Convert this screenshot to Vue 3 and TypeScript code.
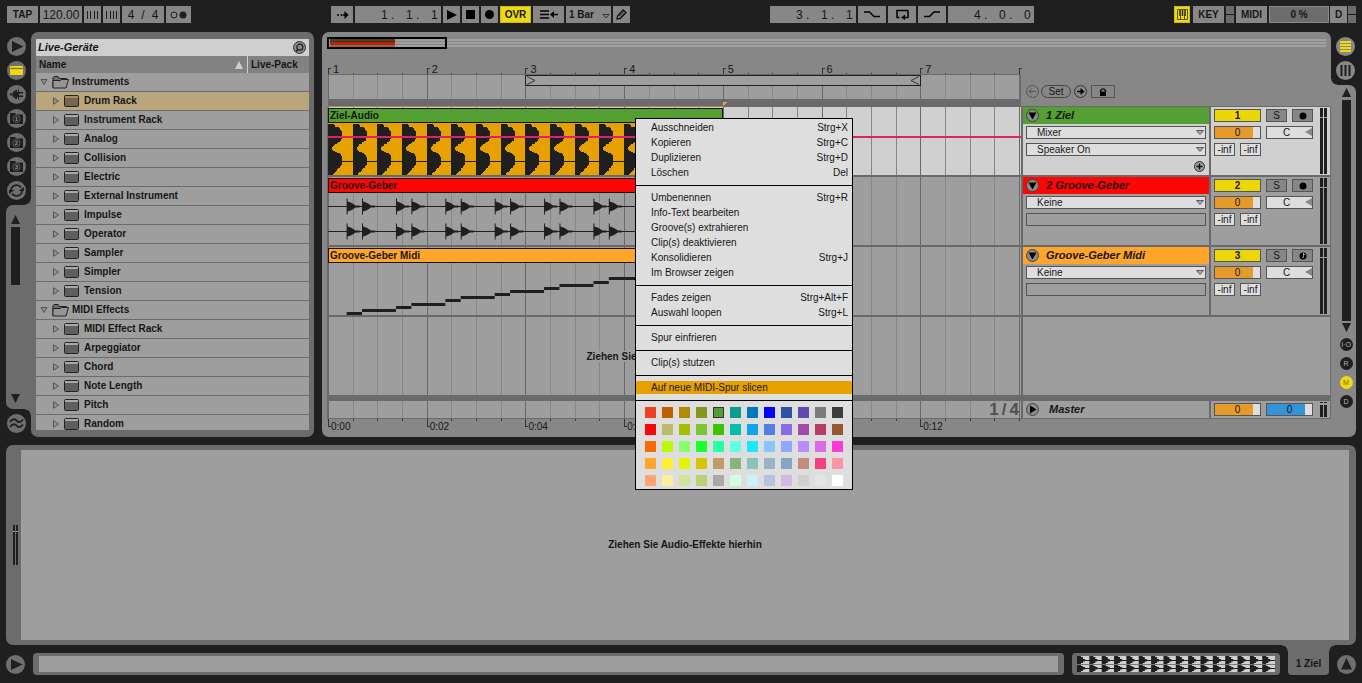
<script setup lang="ts">
import { ref } from 'vue'

interface Device { name: string; folder?: boolean }
interface Track {
  name: string
  clip: string
  color: string
  kind: 'beat' | 'hits' | 'midi'
  inputs: string[]
  number: number
}
interface MenuItem { label: string; keys?: string; current?: boolean }

const devices: Device[] = [
  { name: 'Instruments', folder: true },
  ...['Drum Rack', 'Instrument Rack', 'Analog', 'Collision', 'Electric', 'External Instrument', 'Impulse',
    'Operator', 'Sampler', 'Simpler', 'Tension'].map((name) => ({ name })),
  { name: 'MIDI Effects', folder: true },
  ...['MIDI Effect Rack', 'Arpeggiator', 'Chord', 'Note Length', 'Pitch', 'Random'].map((name) => ({ name })),
]
const selectedDevice = ref('Drum Rack')

const tracks: Track[] = [
  { name: '1 Ziel', clip: 'Ziel-Audio', color: '#539f31', kind: 'beat', inputs: ['Mixer', 'Speaker On'], number: 1 },
  { name: '2 Groove-Geber', clip: 'Groove-Geber', color: '#ff0505', kind: 'hits', inputs: ['Keine'], number: 2 },
  { name: 'Groove-Geber Midi', clip: 'Groove-Geber Midi', color: '#ffa529', kind: 'midi', inputs: ['Keine'], number: 3 },
]

const menu: MenuItem[][] = [
  [
    { label: 'Ausschneiden', keys: 'Strg+X' },
    { label: 'Kopieren', keys: 'Strg+C' },
    { label: 'Duplizieren', keys: 'Strg+D' },
    { label: 'Löschen', keys: 'Del' },
  ],
  [
    { label: 'Umbenennen', keys: 'Strg+R' },
    { label: 'Info-Text bearbeiten' },
    { label: 'Groove(s) extrahieren' },
    { label: 'Clip(s) deaktivieren' },
    { label: 'Konsolidieren', keys: 'Strg+J' },
    { label: 'Im Browser zeigen' },
  ],
  [
    { label: 'Fades zeigen', keys: 'Strg+Alt+F' },
    { label: 'Auswahl loopen', keys: 'Strg+L' },
  ],
  [{ label: 'Spur einfrieren' }],
  [{ label: 'Clip(s) stutzen' }],
  [{ label: 'Auf neue MIDI-Spur slicen', current: true }],
]

const swatches: string[] = (
  'ee4023 c06000 b08b00 85961f 539f31 0a9c8e 007abd 0303ff 2f52a2 624bad 7b7b7b 3c3c3c ' +
  'ff0505 bfba69 a6be00 7ac634 3dc300 00bfaf 10a4ee 5480e4 886ce4 a34bad b73d69 965735 ' +
  'f66c03 bffb00 87ff67 1aff2f 25ffa8 5cffe8 19e9ff 8bc5ff 92a7ff b88dff d86ce4 ff39d4 ' +
  'ffa529 fff034 e3f403 dac301 bd9d63 89b47d 88c4ba 9bb3c4 85a5c2 c68b7c f14180 ff94a6 ' +
  'ffa374 ffee9f d2e498 bad074 a9a9a9 d4fde1 cdf1f8 b9c1e3 cdbbe4 d0d0d0 dfe6e5 ffffff'
).split(' ').map((c) => '#' + c)
const clipColor = ref('#539f31')

const beats = Array.from({ length: 29 }, (_, i) => i)
const bars = [1, 2, 3, 4, 5, 6, 7]
const beatLeft = (i: number): string => `${(i / 28) * 100}%`
const clock = (bar: number): string => `0:${String((bar - 1) * 2).padStart(2, '0')}`

const BEAT = 24.68
const beatStarts = Array.from({ length: 16 }, (_, i) => i * BEAT)
const hitStarts = Array.from({ length: 16 }, (_, i) => Math.floor(i / 2) * BEAT * 2 + (i % 2 ? 34 : 18.6))
const notes = hitStarts.map((x, i) => ({ x, w: (hitStarts[i + 1] ?? 395) - x, y: Math.round(49 - i * 3.15) }))
const lobe = 'M0 0H5L7 1V3H10L12 4V6L14 7V14L13 15V17L10 18L9 20H7L6 22L4 23V26L6 27L7 28L11 29L13 31L14 33V41L12 42V44H10L9 47L7 48L5 50V51H0Z'
const hit = 'M0 -8H1V-5L4 -4L6 -3L9 -1H13V1H9L6 3L4 4L1 5V8H0Z'
</script>

<template>
  <div class="app">
    <header class="transport">
      <div class="group">
        <button class="box w31">TAP</button>
        <input class="box tempo" type="text" value="120.00" aria-label="Tempo" />
        <button class="box w17" aria-label="Nudge down">
          <svg width="13" height="8" viewBox="0 0 13 8"><path d="M1.5 0V8M4.5 0V8M8.5 0V8M11.5 0V8" stroke="#1f1f1f" /></svg>
        </button>
        <button class="box w17" aria-label="Nudge up">
          <svg width="13" height="8" viewBox="0 0 13 8"><path d="M1.5 0V8M5.5 0V8M8.5 0V8M11.5 0V8" stroke="#1f1f1f" /></svg>
        </button>
        <div class="box signature"><span>4</span><span>/</span><span>4</span></div>
        <button class="box w25" aria-label="Metronome">
          <svg width="17" height="8" viewBox="0 0 17 8"><circle cx="4" cy="4" r="3" fill="none" stroke="#1f1f1f" /><circle cx="13" cy="4" r="3.5" fill="#1f1f1f" /></svg>
        </button>
      </div>

      <div class="group">
        <button class="box w22" aria-label="Follow">
          <svg width="13" height="8" viewBox="0 0 13 8"><circle cx="2" cy="4" r="1" /><circle cx="5.5" cy="4" r="1" /><path d="M7 3.2H8.500V0L12.500 4L8.500 8V4.800H7Z" /></svg>
        </button>
        <div class="box position">
          <input value="1 ." aria-label="Bar" /><input value="1 ." aria-label="Beat" /><input value="1" aria-label="Sixteenth" />
        </div>
        <button class="box w17" aria-label="Play"><svg width="10" height="10" viewBox="0 0 10 10"><path d="M0 0L10 5L0 10Z" /></svg></button>
        <button class="box w17" aria-label="Stop"><svg width="9" height="9" viewBox="0 0 9 9"><path d="M0 0H9V9H0Z" /></svg></button>
        <button class="box w17" aria-label="Record"><svg width="9" height="9" viewBox="0 0 9 9"><circle cx="4.5" cy="4.5" r="4.5" /></svg></button>
        <button class="box w31 lit">OVR</button>
        <button class="box w31" aria-label="Back to arrangement">
          <svg width="18" height="9" viewBox="0 0 18 9"><path d="M0 1H9M0 4.5H9M0 8H9" stroke="#000" stroke-width="1.5" /><path d="M10 4.5L14 1V3.700H18V5.300H14V8Z" /></svg>
        </button>
        <label class="box quant">
          <select aria-label="Quantization"><option>1 Bar</option></select>
          <svg width="8" height="5" viewBox="0 0 8 5"><path d="M1 .5H7L4 4Z" fill="none" stroke="#1f1f1f" stroke-width=".8" /></svg>
        </label>
        <button class="box w17" aria-label="Draw mode">
          <svg width="11" height="11" viewBox="0 0 11 11"><path d="M1 10L1.500 7L7 1L10 3.500L4.500 9.500Z" fill="none" stroke="#111" stroke-width="1.3" /><path d="M3 7.500L8 2.500M4.500 8.500L9 3.800" stroke="#111" /></svg>
        </button>
      </div>

      <div class="group">
        <div class="box position">
          <input value="3 ." aria-label="Loop start bar" /><input value="1 ." aria-label="Loop start beat" /><input value="1" aria-label="Loop start sixteenth" />
        </div>
        <button class="box w28" aria-label="Punch in"><svg width="16" height="7" viewBox="0 0 16 7"><path d="M0 1H5.500L10 5.500H16" fill="none" stroke="#000" stroke-width="1.5" /></svg></button>
        <button class="box w28" aria-label="Loop"><svg width="13" height="11" viewBox="0 0 13 11"><path d="M3.500 8.500H1V1.500H12V8.500H8" fill="none" stroke="#000" stroke-width="1.5" /><path d="M5 8.500L9 5.500V11Z" /></svg></button>
        <button class="box w28" aria-label="Punch out"><svg width="16" height="7" viewBox="0 0 16 7"><path d="M0 5.500H5.500L10 1H16" fill="none" stroke="#000" stroke-width="1.5" /></svg></button>
        <div class="box position">
          <input value="4 ." aria-label="Loop length bars" /><input value="0 ." aria-label="Loop length beats" /><input value="0" aria-label="Loop length sixteenths" />
        </div>
      </div>

      <div class="group">
        <button class="box w16 lit" aria-label="Computer MIDI keyboard">
          <svg width="11" height="11" viewBox="0 0 11 11"><path d="M.5 .5H10.500V10.500H.5ZM3.500 6V10M7.500 6V10" fill="none" stroke="#5a5000" /><path d="M3 1V7M5.500 1V7M8 1V7" stroke="#1f1f1f" stroke-width="1.4" /></svg>
        </button>
        <span class="spacer"></span>
        <button class="box w31">KEY</button>
        <span class="leds"><i></i><i></i></span>
        <button class="box w31">MIDI</button>
        <div class="box cpu">0 %</div>
        <button class="box w17 tight">D</button>
        <span class="leds tight"><i></i><i></i></span>
      </div>
    </header>

    <main class="workspace">
      <nav class="rail left" aria-label="Browser">
        <button class="round" aria-label="Hide browser"><svg viewBox="0 0 19 19"><path d="M5 4L16.500 9.500L5 15Z" /></svg></button>
        <button class="round" aria-label="Live devices"><svg viewBox="0 0 19 19"><rect x="3" y="5" width="13" height="9" rx="1" fill="#efda10" /><path d="M3.500 7.500H15.500" stroke="#7a6a00" stroke-width="1.2" /></svg></button>
        <button class="round" aria-label="Plug-ins"><svg viewBox="0 0 19 19"><path d="M3 8.500H6V6.500H8V5H10V7H11V4.500H12V7H16V8.500H12V10.500H16V12H12V14.500H11V12H10V14H8V12.500H6V10.500H3Z" /></svg></button>
        <button v-for="n in 3" :key="n" class="round" :aria-label="'File browser ' + n">
          <svg viewBox="0 0 19 19"><path d="M3 4H8L9 5.500H16V15H3Z" /><circle cx="9.5" cy="10" r="3.6" fill="none" stroke="#858585" stroke-width=".6" /><text x="9.5" y="12.3" text-anchor="middle">{{ n }}</text></svg>
        </button>
        <button class="round" aria-label="Hot-swap"><svg viewBox="0 0 19 19"><path d="M4 9A5.500 5.500 0 0 1 14 6.500M15 10A5.500 5.500 0 0 1 5 12.500" fill="none" stroke="#1f1f1f" stroke-width="1.8" /><path d="M17 6V10H11.500ZM2 13V9H7.500Z" /></svg></button>
        <div class="scroller">
          <svg width="9" height="9" viewBox="0 0 9 9"><path d="M0 9L4.500 0L9 9Z" /></svg>
          <i class="thumb"></i>
          <svg class="down" width="9" height="9" viewBox="0 0 9 9"><path d="M0 0L4.500 9L9 0Z" /></svg>
        </div>
        <button class="round" aria-label="Grooves"><svg viewBox="0 0 19 19"><path d="M3 8C6 4 8 5 10 7S14 8 16 5.500M3 13C6 9 8 10 10 12S14 13 16 10.500" fill="none" stroke="#1f1f1f" stroke-width="1.8" /></svg></button>
      </nav>

      <aside class="browser">
        <h1 class="browser-title">Live-Geräte
          <button class="search" aria-label="Search"><svg width="13" height="13" viewBox="0 0 13 13"><circle cx="6.5" cy="6.5" r="6" fill="#8b8b8b" stroke="#333" /><circle cx="6.8" cy="6.2" r="3" fill="none" stroke="#1f1f1f" stroke-width="1.2" /><path d="M4.800 8.500L3 10.500" stroke="#1f1f1f" stroke-width="1.4" /></svg></button>
        </h1>
        <div class="browser-head">
          <button class="col-name">Name<svg width="8" height="8" viewBox="0 0 8 8"><path d="M0 8L4 0L8 8Z" fill="#cfcfcf" /></svg></button>
          <button class="col-pack">Live-Pack</button>
        </div>
        <ul class="devices">
          <li v-for="d in devices" :key="d.name">
            <button :class="['device', { folder: d.folder, selected: d.name === selectedDevice }]" @click="selectedDevice = d.name">
              <svg v-if="d.folder" class="twist" width="8" height="8" viewBox="0 0 8 8"><path d="M1 1.500H7L4 6.500Z" fill="#8b8b8b" stroke="#444" stroke-width=".8" /></svg>
              <svg v-else class="twist" width="8" height="8" viewBox="0 0 8 8"><path d="M1.500 .8V7.200L6.500 4Z" fill="#959595" stroke="#444" stroke-width=".8" /></svg>
              <svg v-if="d.folder" class="icon" width="17" height="13" viewBox="0 0 17 13"><path d="M1 12V1.500L2 .5H6L7 2.500H14.500V4.500" fill="#6f6f6f" stroke="#222" /><path d="M1 12V4.500H8.500L9.500 3.500H16.500L14 12Z" fill="#959595" stroke="#222" /></svg>
              <svg v-else class="icon" width="15" height="12" viewBox="0 0 15 12"><rect x=".5" y=".5" width="14" height="11" rx="1" :fill="d.name === selectedDevice ? '#a08f6a' : '#a9a9a9'" stroke="#222" /><rect x="1" y="3" width="13" height="8" :fill="d.name === selectedDevice ? '#75674c' : '#5f5f62'" /></svg>
              {{ d.name }}
            </button>
          </li>
        </ul>
      </aside>

      <section class="arrangement">
        <div class="overview">
          <div class="window"><i class="mini"></i></div>
        </div>
        <div class="board">
          <div class="row head">
            <div class="ruler">
              <div class="numbers">
                <div class="grid">
                  <i v-for="b in beats" :key="b" :class="{ bar: b % 4 === 0 }" :style="{ left: beatLeft(b) }"></i>
                  <span v-for="n in bars" :key="'n' + n" :style="{ left: beatLeft((n - 1) * 4) }">{{ n }}</span>
                </div>
              </div>
              <div class="strip">
                <div class="grid">
                  <i v-for="b in beats" :key="b" :class="{ bar: b % 4 === 0 }" :style="{ left: beatLeft(b) }"></i>
                  <div class="loop">
                    <svg width="10" height="9" viewBox="0 0 10 9"><path d="M1 .5L9 4.500L1 8.500" fill="none" stroke="#333" /></svg>
                    <svg width="10" height="9" viewBox="0 0 10 9"><path d="M9 .5L1 4.500L9 8.500" fill="none" stroke="#333" /></svg>
                  </div>
                </div>
              </div>
              <div class="scrub"><div class="selection"></div></div>
            </div>
            <div class="locators">
              <button class="tiny" aria-label="Previous locator"><svg width="13" height="13" viewBox="0 0 13 13"><circle cx="6.5" cy="6.5" r="6" fill="none" stroke="#555" /><path d="M3 6.500H10M6 3.500L3 6.500L6 9.500" fill="none" stroke="#555" /></svg></button>
              <button class="set">Set</button>
              <button class="tiny" aria-label="Next locator"><svg width="13" height="13" viewBox="0 0 13 13"><circle cx="6.5" cy="6.5" r="6" fill="none" stroke="#333" /><path d="M3 6.500H8" stroke="#000" stroke-width="1.5" /><path d="M6.500 3L10.500 6.500L6.500 10Z" /></svg></button>
              <button class="lock" aria-label="Lock envelopes"><svg width="8" height="8" viewBox="0 0 8 8"><path d="M1.500 4V2.500L3 1H5L6.500 2.500V4" fill="none" stroke="#000" stroke-width="1.2" /><path d="M1 3.500H7V8H1Z" /></svg></button>
            </div>
          </div>

          <div v-for="t in tracks" :key="t.name" :class="['row', 'track', { chosen: t.number === 1 }]">
            <div class="lane">
              <div class="grid">
                <i v-for="b in beats" :key="b" :class="{ bar: b % 4 === 0 }" :style="{ left: beatLeft(b) }"></i>
              </div>
              <div :class="['clip', t.kind]">
                <div class="clip-title" :style="{ background: t.color }">{{ t.clip }}</div>
                <svg class="wave" viewBox="0 0 395 52" preserveAspectRatio="none">
                  <template v-if="t.kind === 'beat'">
                    <path v-for="x in beatStarts" :key="x" :d="lobe" :transform="`translate(${x} 1)`" />
                    <path d="M0 38.500H395" stroke="#1f1f1f" />
                  </template>
                  <template v-else-if="t.kind === 'hits'">
                    <path d="M0 13.500H395M0 38.500H395" stroke="#1f1f1f" />
                    <template v-for="x in hitStarts" :key="x">
                      <path :d="hit" :transform="`translate(${x} 13.5)`" />
                      <path :d="hit" :transform="`translate(${x} 38.5)`" />
                    </template>
                  </template>
                  <template v-else>
                    <rect v-for="n in notes" :key="n.x" :x="n.x" :y="n.y" :width="n.w" height="3" />
                  </template>
                </svg>
              </div>
              <i v-if="t.number === 1" class="envelope"></i>
            </div>
            <div class="names">
              <div class="track-title" :style="{ background: t.color }">
                <button class="tiny" :aria-label="'Fold ' + t.name"><svg width="13" height="13" viewBox="0 0 13 13"><circle cx="6.5" cy="6.5" r="6" fill="#8b8b8b" stroke="#444" /><path d="M2.500 3.500H10.500L6.500 10.500Z" /></svg></button>
                {{ t.name }}
              </div>
              <label v-for="o in t.inputs" :key="o" class="chooser">
                <select :aria-label="t.name + ': ' + o"><option>{{ o }}</option></select>
                <svg width="8" height="5" viewBox="0 0 8 5"><path d="M.5 .5H7.500L4 4.500Z" fill="#aaa" stroke="#444" stroke-width=".8" /></svg>
              </label>
              <div v-if="t.inputs.length < 2" class="chooser blank"></div>
              <button v-else class="add" aria-label="Add lane"><svg width="11" height="11" viewBox="0 0 11 11"><circle cx="5.5" cy="5.5" r="5" fill="#9a9a9a" stroke="#333" /><path d="M2.500 5.500H8.500M5.500 2.500V8.500" stroke="#111" stroke-width="1.4" /></svg></button>
            </div>
            <div class="mixer">
              <div class="controls">
                <button class="cell wide activator">{{ t.number }}</button>
                <button class="cell dim">S</button>
                <button class="cell dim" :aria-label="'Arm ' + t.name"><svg width="8" height="8" viewBox="0 0 8 8"><circle cx="4" cy="4" r="3.5" fill="#000" /><path v-if="t.kind === 'midi'" d="M4.500 1V5.500H3M4.500 1.500L6 3" stroke="#aaa" stroke-width=".9" fill="none" /></svg></button>
                <input class="cell wide volume" value="0" :aria-label="'Volume ' + t.name" />
                <label class="wide pan"><input class="cell" value="C" :aria-label="'Pan ' + t.name" /></label>
                <input class="cell" value="-inf" :aria-label="'Send A ' + t.name" />
                <input class="cell" value="-inf" :aria-label="'Send B ' + t.name" />
              </div>
              <div class="meter"><i></i><i></i></div>
            </div>
          </div>

          <div class="row empty">
            <div class="lane">
              <div class="grid">
                <i v-for="b in beats" :key="b" :class="{ bar: b % 4 === 0 }" :style="{ left: beatLeft(b) }"></i>
              </div>
              <p class="hint"><span>Ziehen Sie</span></p>
            </div>
            <div class="void"></div>
          </div>

          <div class="row master">
            <div class="lane">
              <div class="grid">
                <i v-for="b in beats" :key="b" :class="{ bar: b % 4 === 0 }" :style="{ left: beatLeft(b) }"></i>
              </div>
              <div class="fraction"><span>1</span><span>/</span><span>4</span></div>
            </div>
            <div class="names">
              <div class="track-title">
                <button class="tiny" aria-label="Unfold Master"><svg width="13" height="13" viewBox="0 0 13 13"><circle cx="6.5" cy="6.5" r="6" fill="#8b8b8b" stroke="#444" /><path d="M4 2.500V10.500L10.500 6.500Z" /></svg></button>
                Master
              </div>
            </div>
            <div class="mixer">
              <div class="controls">
                <input class="cell wide volume" value="0" aria-label="Master volume" />
                <input class="cell wide cue" value="0" aria-label="Cue volume" />
              </div>
              <div class="meter"><i></i><i></i></div>
            </div>
          </div>
        </div>
        <div class="times">
          <div class="grid">
            <i v-for="b in beats" :key="b" :class="{ bar: b % 4 === 0 && b < 28 }" :style="{ left: beatLeft(b) }"></i>
            <span v-for="n in bars" :key="'t' + n" :style="{ left: beatLeft((n - 1) * 4) }">{{ clock(n) }}</span>
          </div>
        </div>
      </section>

      <nav class="rail right" aria-label="Views">
        <button class="round" aria-label="Arrangement view"><svg viewBox="0 0 19 19"><path d="M4 5H15M4 8H15M4 11H15M4 14H15" stroke="#efda10" stroke-width="2" /></svg></button>
        <button class="round" aria-label="Session view"><svg viewBox="0 0 19 19"><path d="M5.500 4V15M9.500 4V15M13.500 4V15" stroke="#1f1f1f" stroke-width="2" /></svg></button>
        <div class="scroller">
          <svg width="9" height="9" viewBox="0 0 9 9"><path d="M0 9L4.500 0L9 9Z" /></svg>
          <i class="thumb"></i>
          <svg class="down" width="9" height="9" viewBox="0 0 9 9"><path d="M0 0L4.500 9L9 0Z" /></svg>
          <button class="dot">I·O</button>
          <button class="dot">R</button>
          <button class="dot on">M</button>
          <button class="dot">D</button>
        </div>
      </nav>
    </main>

    <section class="detail">
      <div class="meter"><i></i><i></i></div>
      <div class="drop">Ziehen Sie Audio-Effekte hierhin</div>
    </section>

    <footer class="status">
      <button class="round" aria-label="Info view"><svg viewBox="0 0 19 19"><path d="M5 4L16.500 9.500L5 15Z" /></svg></button>
      <div class="message"></div>
      <div class="clip-overview">
        <svg viewBox="0 0 198 16" preserveAspectRatio="none">
          <path d="M0 4.500H198M0 12.500H198" stroke="#1f1f1f" />
          <path d="M0 8.500H198" stroke="#777" />
          <template v-for="n in 16" :key="n">
            <path d="M0 0H4V1H6V3H8V5.500H6V7H4V8H0Z" :transform="`translate(${(n - 1) * 12.35} 0)`" />
            <path d="M0 9H4V10H6V11H8V13.500H6V15H4V16H0Z" :transform="`translate(${(n - 1) * 12.35} 0)`" />
          </template>
        </svg>
      </div>
      <button class="tab">1 Ziel</button>
      <button class="round" aria-label="Detail view"><svg viewBox="0 0 19 19"><path d="M4 14.500L9.500 3L15 14.500Z" /></svg></button>
    </footer>

    <div class="menu" role="menu">
      <div v-for="(group, g) in menu" :key="g" class="menu-group">
        <button v-for="m in group" :key="m.label" role="menuitem" :class="['menu-item', { current: m.current }]">
          <span>{{ m.label }}</span><span>{{ m.keys }}</span>
        </button>
      </div>
      <div class="palette">
        <button v-for="c in swatches" :key="c" :class="{ picked: c === clipColor }" :style="{ background: c }" :aria-label="c" @click="clipColor = c"></button>
      </div>
    </div>
  </div>
</template>

<style>
body { margin: 0; background: #1f1f1f; }
</style>

<style scoped>
.app, .app * { box-sizing: border-box; }
.app {
  position: relative;
  display: flex;
  flex-direction: column;
  min-width: 1200px;
  min-height: 100vh;
  background: #1f1f1f;
  color: #161616;
  font: 10px/12px "Liberation Sans", Arial, sans-serif;
}
button, input, select {
  margin: 0;
  padding: 0;
  border: 0;
  border-radius: 0;
  background: none;
  color: inherit;
  font: inherit;
  appearance: none;
  min-width: 0;
}
svg { display: block; flex: none; }

.transport { display: flex; justify-content: space-between; padding: 6px 6px 9px 7px; }
.group { display: flex; gap: 2px; }
.box {
  display: flex;
  align-items: center;
  justify-content: center;
  height: 17px;
  background: #878787;
  font-weight: bold;
}
.w16 { width: 16px; }
.w17 { width: 17px; }
.w22 { width: 22px; }
.w25 { width: 25px; }
.w28 { width: 28px; }
.w31 { width: 31px; }
.lit { background: #efda10; border: 1px solid #cdbb15; }
.tempo { width: 42px; font-size: 12px; font-weight: normal; text-align: center; }
.signature { width: 42px; gap: 7px; font-size: 12px; font-weight: normal; }
.position { width: 86px; padding-left: 26px; font-size: 12px; font-weight: normal; }
.position input { width: 25px; }
.position input:last-child { width: 10px; }
.quant { width: 45px; gap: 6px; padding-left: 2px; }
.quant select { width: 27px; font-weight: bold; }
.quant svg { margin-top: 3px; }
.spacer { width: 0; margin-right: -1px; }
.leds { display: flex; flex-direction: column; gap: 1px; width: 8px; }
.leds i { flex: 1; background: #6c6c6c; }
.cpu { width: 60px; background: #6c6c6c; border: 1px solid #8b8b8b; }
.tight { margin-left: -1px; }

.workspace { display: flex; }
.rail { display: flex; flex-direction: column; gap: 5px; padding-top: 5px; }
.rail.left { width: 31px; padding-bottom: 4px; padding-left: 7px; }
.rail.right { width: 31px; padding-left: 5px; --tone: #878787; }
.rail.left, .status { --tone: #6f6f6f; }
.round { flex: none; width: 19px; height: 19px; border-radius: 50%; background: var(--tone); }
.round svg { width: 19px; height: 19px; fill: #1f1f1f; }
.round text { fill: #9a9a9a; font: bold 6px "Liberation Sans", Arial, sans-serif; }
.scroller { position: relative; flex: 1; display: flex; flex-direction: column; align-items: center; }
.scroller svg { fill: #1f1f1f; }
.rail.left .scroller {
  margin-left: -1px;
  padding: 10px 6px 6px 0;
  border-radius: 7px 0 0 7px;
  background: #6c6c6c;
}
.scroller::before {
  content: "";
  position: absolute;
  top: -6px;
  width: 6px;
  height: 6px;
}
.rail.left .scroller::before { right: 0; background: radial-gradient(circle at 0 0, transparent 5px, #6c6c6c 6px); }
.rail.left .scroller::after {
  content: "";
  position: absolute;
  right: 0;
  bottom: -6px;
  width: 6px;
  height: 6px;
  background: radial-gradient(circle at 0 100%, transparent 5px, #6c6c6c 6px);
}
.thumb { width: 9px; background: #1f1f1f; }
.rail.left .thumb { height: 58px; margin-top: 3px; }
.rail.left .down { margin-top: auto; }
.rail.right .scroller {
  margin-left: -5px;
  margin-right: 6px;
  padding: 3px 0 29px 5px;
  border-radius: 0 7px 7px 0;
  background: #878787;
}
.rail.right .scroller::before { left: 0; background: radial-gradient(circle at 100% 0, transparent 5px, #878787 6px); }
.rail.right .thumb { flex: 1; margin: 3px 0 2px; }
.dot {
  flex: none;
  width: 13px;
  height: 13px;
  margin-top: 6px;
  border-radius: 50%;
  background: #1f1f1f;
  color: #b0b0b0;
  font-size: 7px;
  line-height: 13px;
  text-align: center;
}
.dot.on { background: #efda10; color: #7a6a00; }

.browser {
  display: flex;
  flex-direction: column;
  width: 283px;
  padding: 7px 5px;
  border-radius: 7px;
  background: #6c6c6c;
  font-weight: bold;
}
.browser-title {
  display: flex;
  align-items: center;
  justify-content: space-between;
  height: 17px;
  margin: 0;
  padding: 0 3px 0 2px;
  background: #cfcfcf;
  font: italic bold 11px/17px "Liberation Sans", Arial, sans-serif;
}
.browser-head { display: flex; height: 17px; background: #828282; }
.col-name { flex: 1; display: flex; align-items: center; justify-content: space-between; padding: 0 4px 0 3px; }
.col-pack { width: 62px; padding-left: 3px; border-left: 1px solid #cfcfcf; text-align: left; }
.devices { flex: 1 1 0; min-height: 0; margin: 0; padding: 0; overflow: hidden; background: #9e9e9e; list-style: none; }
.device {
  display: flex;
  align-items: center;
  width: 100%;
  height: 19px;
  padding-left: 16px;
  border-bottom: 1px solid #6c6c6c;
  text-align: left;
}
.device.folder { padding-left: 4px; }
.device.selected { background: #b9a67d; }
.device .icon { margin: 0 5px 0 4px; }
.device.folder .icon { margin-right: 3px; }

.arrangement {
  flex: 1;
  min-width: 0;
  margin-left: 8px;
  padding: 5px 0 0 5px;
  border-radius: 7px 7px 0 7px;
  background: #878787;
}
.overview {
  height: 12px;
  margin-right: 5px;
  background: linear-gradient(#a0a0a0 0 2px, #878787 2px 3px, #a0a0a0 3px 5px, #878787 5px 6px, #a0a0a0 6px 8px) 0 2px / 100% 8px no-repeat;
}
.window { width: 12%; height: 12px; padding: 0 1px; border: 2px solid #000; }
.mini { display: block; width: 57%; height: 8px; background: linear-gradient(#3f4a22 0 2px, #6b1a10 2px 3px, #c02010 3px 5px, #8a3a20 5px 6px, #a56030 6px); }
.board { border: 1px solid #6a6a6a; border-width: 0 1px 1px; background: #6a6a6a; }
.row { display: grid; grid-template-columns: minmax(0, 1fr) 186px 119px; column-gap: 2px; }
.row.head { margin: 0 -1px; padding: 0 1px; background: #878787; column-gap: 0; grid-template-columns: minmax(0, 1fr) 309px; }
.grid { position: absolute; inset: 0 2px 0 0; }
.grid i { position: absolute; top: 0; bottom: 0; width: 1px; background: #868686; }
.grid i.bar { background: #6a6a6a; }
.numbers { position: relative; height: 25px; }
.numbers .grid i { top: auto; height: 1px; background: #333; }
.numbers .grid i.bar { width: 3px; height: 6px; border: 1px solid #333; border-width: 1px 0 0 1px; background: none; }
.numbers span { position: absolute; top: 14px; padding-left: 5px; font-size: 11px; }
.strip { position: relative; height: 25px; border: 1px solid #6a6a6a; border-width: 1px 1px 0 0; background: #9e9e9e; }
.strip .grid { right: 1px; }
.loop {
  position: absolute;
  top: 0;
  left: 28.57%;
  width: 57.3%;
  height: 11px;
  display: flex;
  justify-content: space-between;
  border: 1px solid #1f1f1f;
  background: #9e9e9e;
}
.scrub { height: 8px; background: #6a6a6a; }
.selection { position: relative; width: 57%; height: 8px; border-bottom: 1px solid #ad8d33; }
.selection::after {
  content: "";
  position: absolute;
  top: 3px;
  right: -4px;
  width: 4px;
  height: 4px;
  background: linear-gradient(135deg, #d9a63a 60%, transparent 60%);
}
.locators { display: flex; align-items: center; gap: 2px; padding: 28px 0 0 5px; border-bottom: 1px solid #6a6a6a; }
.tiny { flex: none; width: 13px; height: 13px; }
.set { width: 30px; height: 13px; border: 1px solid #444; border-radius: 7px; line-height: 11px; }
.set + .tiny { margin: 0 2px 0 1px; }
.lock { display: flex; align-items: center; justify-content: center; width: 24px; height: 13px; border: 1px solid #555; }

.track { height: 70px; padding-bottom: 2px; }
.lane { position: relative; background: #9e9e9e; overflow: hidden; }
.chosen .lane, .chosen .names, .chosen .mixer { background: #d0d0d0; }
.clip { position: relative; display: flex; flex-direction: column; width: 57%; height: 68px; padding-top: 1px; }
.clip-title {
  height: 15px;
  padding-left: 1px;
  border: 1px solid #1a1010;
  font-weight: bold;
  line-height: 13px;
}
.wave { width: 100%; height: 52px; fill: #1f1f1f; }
.beat .wave { background: #e6a000; }
.beat .wave path { shape-rendering: crispEdges; }
.envelope { position: absolute; top: 29px; left: 0; right: 0; height: 2px; background: #e0206a; }
.names, .mixer { background: #9e9e9e; }
.names { display: flex; flex-direction: column; }
.track-title {
  display: flex;
  align-items: center;
  gap: 7px;
  height: 17px;
  padding-left: 3px;
  font: italic bold 11px/17px "Liberation Sans", Arial, sans-serif;
}
.chooser {
  display: flex;
  align-items: center;
  height: 13px;
  margin: 2px 3px;
  padding: 0 1px 0 10px;
  border: 1px solid #555;
  background: #dedede;
}
.chooser select { flex: 1; height: 11px; line-height: 11px; }
.chooser.blank { background: #9e9e9e; }
.add { align-self: flex-end; width: 11px; height: 11px; margin: 3px 4px 0 0; }
.mixer { display: flex; justify-content: space-between; padding: 1px 3px; }
.controls { display: grid; grid-template-columns: repeat(4, 21px); align-content: start; gap: 4px 5px; padding-top: 1px; }
.cell {
  display: flex;
  align-items: center;
  justify-content: center;
  width: 100%;
  height: 13px;
  border: 1px solid #555;
  background: #dedede;
  line-height: 11px;
  text-align: center;
}
.wide { grid-column: span 2; }
.activator { background: #ecd606; font-weight: bold; }
.dim { background: #878787; }
.volume { background: linear-gradient(90deg, #e69a2a 84%, #dedede 84%); }
.cue { background: linear-gradient(90deg, #3293d6 84%, #dedede 84%); }
.pan { position: relative; }
.pan .cell { padding-right: 6px; }
.pan::after {
  content: "";
  position: absolute;
  top: 2px;
  right: 1px;
  border: solid transparent;
  border-width: 4px 7px 4px 0;
  border-right-color: #888;
}
.meter { display: flex; gap: 1px; }
.meter i { width: 3px; background: linear-gradient(#1f1f1f 9px, #9e9e9e 9px 10px, #1f1f1f 10px); }
.row.empty { grid-template-columns: minmax(0, 1fr) 307px; height: 84px; padding-bottom: 6px; }
.void { background: #9e9e9e; }
.hint { position: relative; width: 176px; margin: 34px auto 0; font-weight: bold; }
.hint span { background: #9e9e9e; }
.row.master { height: 17px; }
.master .track-title { gap: 10px; }
.master .meter i { background: linear-gradient(#1f1f1f 1px, #9e9e9e 1px 3px, #1f1f1f 3px); }
.fraction {
  position: relative;
  display: flex;
  justify-content: flex-end;
  gap: 3px;
  padding-right: 2px;
  color: #505050;
  font: bold 17px/17px "Liberation Sans", Arial, sans-serif;
}
.times { position: relative; height: 18px; margin: 0 310px 0 1px; }
.times .grid i { height: 2px; bottom: auto; background: #333; }
.times .grid i.bar { width: 3px; height: 8px; border: 1px solid #333; border-width: 0 0 1px 1px; background: none; }
.times span { position: absolute; top: 2px; padding-left: 3px; }

.detail {
  flex: 1;
  display: flex;
  margin: 8px 6px 0;
  padding: 5px 7px 5px 7px;
  border-radius: 7px;
  background: #6c6c6c;
}
.detail .meter { align-self: center; height: 40px; margin-right: 3px; }
.detail .meter i { width: 2px; background: linear-gradient(#1f1f1f 6px, #9e9e9e 6px 7px, #1f1f1f 7px); }
.drop { flex: 1; display: flex; align-items: center; justify-content: center; background: #9e9e9e; font-weight: bold; }

.status { display: flex; align-items: center; gap: 8px; height: 38px; padding: 0 6px; }
.message, .clip-overview { height: 22px; border: 3px solid #6c6c6c; border-width: 3px 6px; border-radius: 4px; background: #9e9e9e; }
.message { flex: 1; }
.clip-overview { width: 208px; border-width: 3px 5px; background: #d0d0d0; }
.clip-overview svg { width: 100%; height: 16px; fill: #1f1f1f; }
.tab {
  position: relative;
  align-self: flex-start;
  width: 41px;
  height: 30px;
  padding-top: 8px;
  border-radius: 0 0 4px 4px;
  background: #6c6c6c;
  font-weight: bold;
}
.tab::before, .tab::after { content: ""; position: absolute; top: 0; width: 6px; height: 6px; }
.tab::before { left: -6px; background: radial-gradient(circle at 0 100%, transparent 5px, #6c6c6c 6px); }
.tab::after { right: -6px; background: radial-gradient(circle at 100% 100%, transparent 5px, #6c6c6c 6px); }

.menu {
  position: absolute;
  top: 118px;
  left: 635px;
  width: 218px;
  border: 1px solid #000;
  background: #dedede;
}
.menu-group { display: flex; flex-direction: column; padding: 4px 0 5px; border-bottom: 1px solid #000; }
.menu-group:first-child { padding-top: 1px; }
.menu-item {
  display: flex;
  justify-content: space-between;
  height: 15px;
  padding: 1px 4px 1px 15px;
  line-height: 13px;
}
.menu-item.current { background: linear-gradient(#e6a000, #e6a000) 0 1px / 100% 13px no-repeat; }
.palette { display: grid; grid-template-columns: repeat(12, 11px); gap: 6px; padding: 6px 9px 3px; }
.palette button { height: 11px; }
.palette .picked { border: 1px solid #333; }
</style>
